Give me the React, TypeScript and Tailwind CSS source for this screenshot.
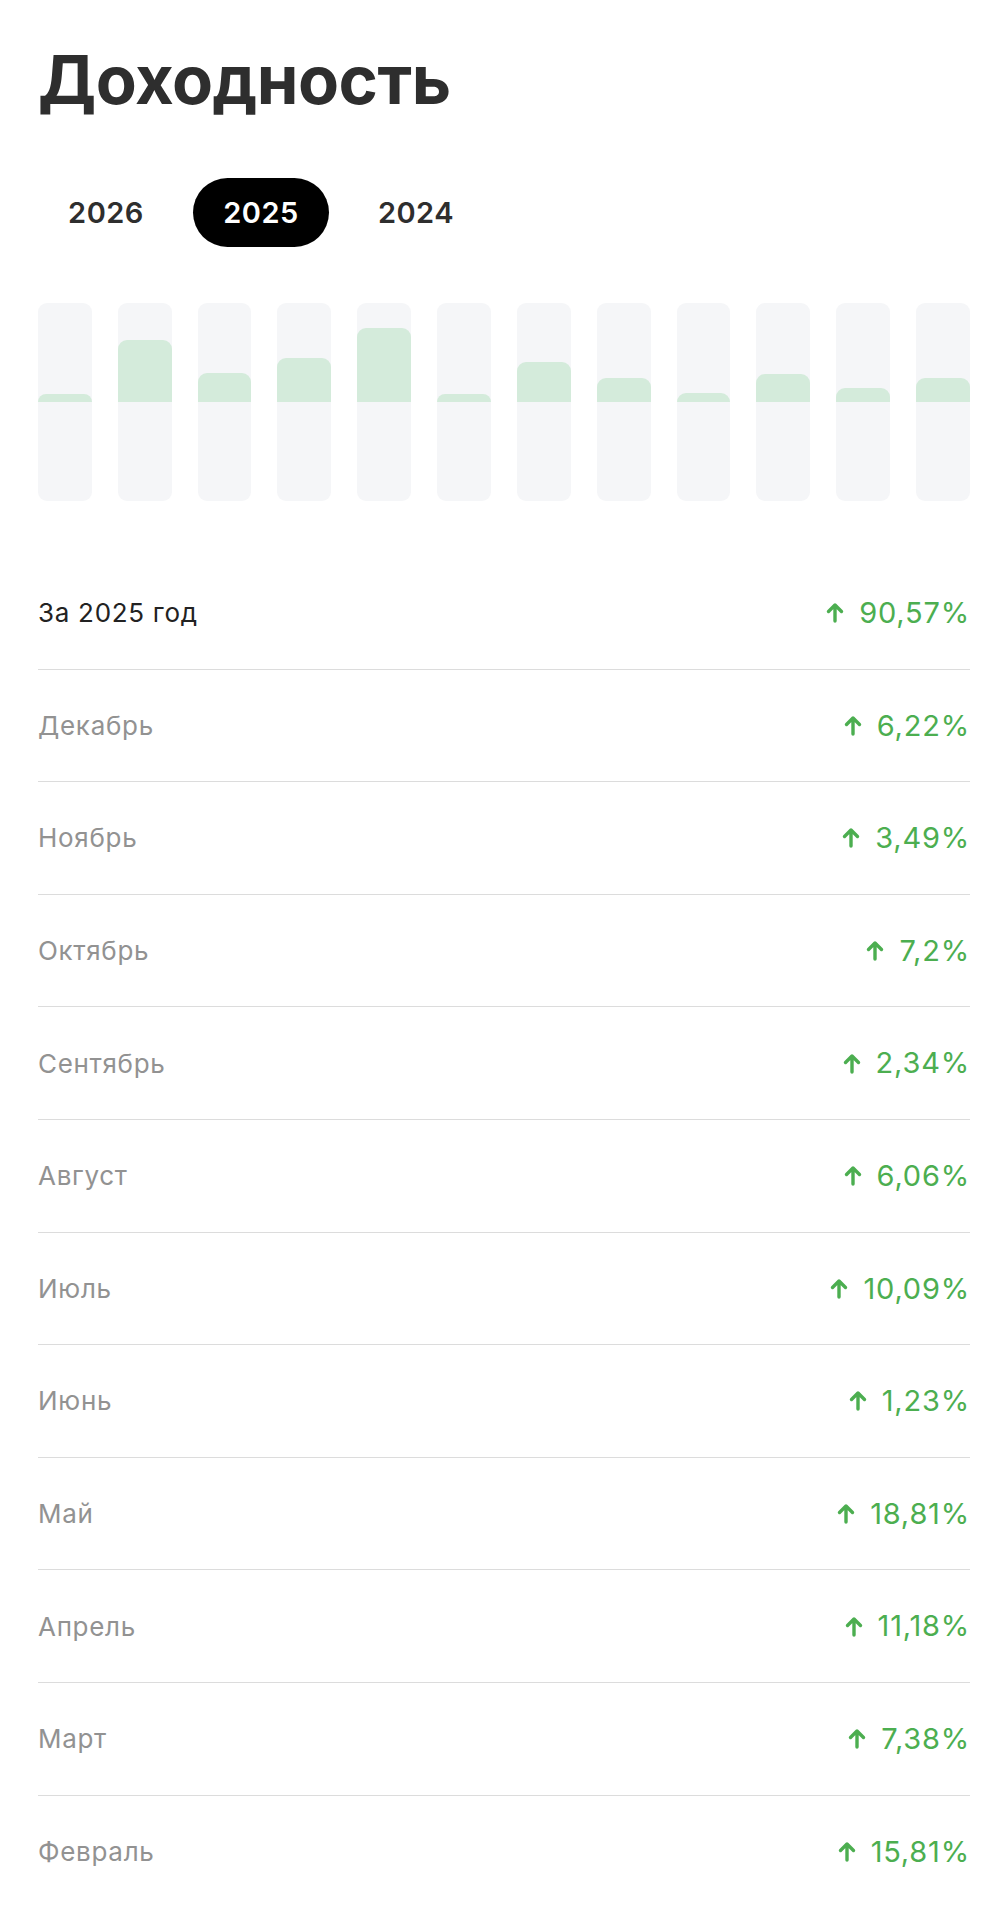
const years = ["2026", "2025", "2024"];

// jan..dec, value in %
const bars = [1.5, 15.81, 7.38, 11.18, 18.81, 1.23, 10.09, 6.06, 2.34, 7.2, 3.49, 6.22];

const rows = [
  { label: "Декабрь", value: "6,22%" },
  { label: "Ноябрь", value: "3,49%" },
  { label: "Октябрь", value: "7,2%" },
  { label: "Сентябрь", value: "2,34%" },
  { label: "Август", value: "6,06%" },
  { label: "Июль", value: "10,09%" },
  { label: "Июнь", value: "1,23%" },
  { label: "Май", value: "18,81%" },
  { label: "Апрель", value: "11,18%" },
  { label: "Март", value: "7,38%" },
  { label: "Февраль", value: "15,81%" },
];

function UpArrow() {
  return (
    <svg width="18" height="21" viewBox="0 0 18 21" fill="none" className="shrink-0">
      <path
        d="M9 19V3M2.5 9.5L9 3l6.5 6.5"
        stroke="#4cae50"
        strokeWidth="3.4"
        strokeLinecap="round"
        strokeLinejoin="round"
      />
    </svg>
  );
}

function Row({ label, value, main }: { label: string; value: string; main?: boolean }) {
  return (
    <div className="flex items-center justify-between h-[112.6px] border-b border-[#dcdcdc] last:border-b-0">
      <span
        className={
          main
            ? "text-[26px] tracking-[0.7px] text-[#222222]"
            : "text-[26px] tracking-[0.7px] text-[#929292]"
        }
      >
        {label}
      </span>
      <span className="flex items-center gap-[15px] text-[29px] tracking-[0.8px] text-[#4cae50]">
        <UpArrow />
        {value}
      </span>
    </div>
  );
}

export default function App() {
  return (
    <div className="w-[1008px] min-h-[1920px] bg-white px-[38px] pt-[46px]" style={{ fontFamily: "Inter, 'Noto Sans', sans-serif" }}>
      {/* title */}
      <h1 className="text-[67px] leading-none font-bold text-[#2e2e2e] tracking-[-0.5px]">Доходность</h1>

      {/* years */}
      <div className="flex gap-[19px] mt-[65px]">
        {years.map((y) => (
          <div
            key={y}
            className={
              y === "2025"
                ? "w-[136px] h-[69px] rounded-full bg-black text-white flex items-center justify-center text-[29px] font-semibold tracking-[0.5px]"
                : "w-[136px] h-[69px] rounded-full text-[#2e2e2e] flex items-center justify-center text-[29px] font-semibold tracking-[0.5px]"
            }
          >
            {y}
          </div>
        ))}
      </div>

      {/* chart */}
      <div className="grid grid-cols-12 gap-[26px] mt-[56px]">
        {bars.map((v, i) => (
          <div key={i} className="flex flex-col h-[198px] rounded-[9px] bg-[#f5f6f8] overflow-hidden">
            <div className="h-[99px] flex flex-col justify-end">
              <div className="bg-[#d4ebdb] rounded-t-[9px]" style={{ height: Math.max(8, Math.round(v * 3.93)) }} />
            </div>
          </div>
        ))}
      </div>

      {/* list */}
      <div className="mt-[56px]">
        <Row label="За 2025 год" value="90,57%" main />
        {rows.map((r) => (
          <Row key={r.label} label={r.label} value={r.value} />
        ))}
      </div>
    </div>
  );
}
